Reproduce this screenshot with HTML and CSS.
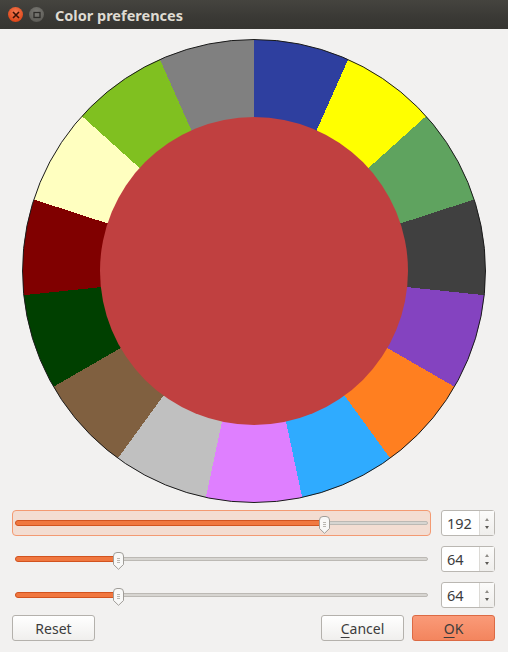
FILE: index.html
```html
<!DOCTYPE html>
<html lang="en">

<head>
    <meta charset="utf-8">
    <title>Color preferences</title>
    <link rel="stylesheet" href="styles.css">
</head>

<body>
    <div class="titlebar">
        <span class="win-btn close">
            <svg width="8" height="8" viewBox="0 0 8 8"><path d="M1 1 L7 7 M7 1 L1 7" stroke="#3a1206" stroke-width="1.6" /></svg>
        </span>
        <span class="win-btn restore">
            <svg width="8" height="8" viewBox="0 0 8 8"><rect x="1" y="1.5" width="6" height="5" fill="none" stroke="#2d2c29" stroke-width="1.3" /></svg>
        </span>
        <span class="title">Color preferences</span>
    </div>

    <div class="dialog">
        <div class="wheel-area">
            <div class="wheel">
                <div class="wheel-center"></div>
            </div>
        </div>

        <div class="channel">
            <div class="slider focused">
                <div class="groove">
                    <div class="fill" style="width: 75.3%;"></div>
                    <span class="handle" style="left: 75.3%;">
                        <svg width="11" height="18" viewBox="0 0 11 18"><path d="M0.5 4 Q0.5 0.5 4 0.5 L7 0.5 Q10.5 0.5 10.5 4 L10.5 12.5 L5.5 17.3 L0.5 12.5 Z" fill="#f8f8f7" stroke="#a09d98" /><path d="M4 6.5 H7 M4 8.5 H7 M4 10.5 H7" stroke="#b9b6b1" /></svg>
                    </span>
                </div>
            </div>
            <div class="spin">
                <span class="spin-value">192</span>
                <span class="spin-arrows"><i class="up"></i><i class="down"></i></span>
            </div>
        </div>

        <div class="channel">
            <div class="slider">
                <div class="groove">
                    <div class="fill" style="width: 25.1%;"></div>
                    <span class="handle" style="left: 25.1%;">
                        <svg width="11" height="18" viewBox="0 0 11 18"><path d="M0.5 4 Q0.5 0.5 4 0.5 L7 0.5 Q10.5 0.5 10.5 4 L10.5 12.5 L5.5 17.3 L0.5 12.5 Z" fill="#f8f8f7" stroke="#a09d98" /><path d="M4 6.5 H7 M4 8.5 H7 M4 10.5 H7" stroke="#b9b6b1" /></svg>
                    </span>
                </div>
            </div>
            <div class="spin">
                <span class="spin-value">64</span>
                <span class="spin-arrows"><i class="up"></i><i class="down"></i></span>
            </div>
        </div>

        <div class="channel">
            <div class="slider">
                <div class="groove">
                    <div class="fill" style="width: 25.1%;"></div>
                    <span class="handle" style="left: 25.1%;">
                        <svg width="11" height="18" viewBox="0 0 11 18"><path d="M0.5 4 Q0.5 0.5 4 0.5 L7 0.5 Q10.5 0.5 10.5 4 L10.5 12.5 L5.5 17.3 L0.5 12.5 Z" fill="#f8f8f7" stroke="#a09d98" /><path d="M4 6.5 H7 M4 8.5 H7 M4 10.5 H7" stroke="#b9b6b1" /></svg>
                    </span>
                </div>
            </div>
            <div class="spin">
                <span class="spin-value">64</span>
                <span class="spin-arrows"><i class="up"></i><i class="down"></i></span>
            </div>
        </div>

        <div class="buttons">
            <button class="btn">Reset</button>
            <span class="spacer"></span>
            <button class="btn"><u>C</u>ancel</button>
            <button class="btn primary"><u>O</u>K</button>
        </div>
    </div>
</body>

</html>
```

FILE: styles.css
```css
* {
    margin: 0px;
    padding: 0px;
    box-sizing: border-box;
}

body {
    width: 508px;
    height: 652px;
    background: #f2f1f0;
    font-family: "Noto Sans", "DejaVu Sans", sans-serif;
    font-size: 13px;
    color: #3c3c3c;
    overflow: hidden;
}

/* window decoration */
.titlebar {
    height: 29px;
    display: flex;
    align-items: center;
    padding-left: 8px;
    background: linear-gradient(#45443f, #3a3935 60%, #363531);
}

.win-btn {
    width: 15px;
    height: 15px;
    border-radius: 50%;
    display: flex;
    align-items: center;
    justify-content: center;
    margin-right: 6px;
}

.win-btn.close {
    background: radial-gradient(circle at 50% 35%, #f47a52, #df4a1d 70%, #b9360f);
}

.win-btn.restore {
    background: radial-gradient(circle at 50% 35%, #7c7b76, #605f5a 70%, #4a4945);
}

.title {
    margin-left: 5px;
    color: #dfdbd2;
    font-weight: bold;
    font-size: 14.5px;
}

.dialog {
    padding: 0 13px 0 12px;
}

/* colour wheel */
.wheel-area {
    height: 481px;
    display: flex;
    justify-content: center;
    padding-top: 10px;
}

.wheel {
    width: 464px;
    height: 464px;
    border-radius: 50%;
    border: 1px solid #1a1a1a;
    display: flex;
    align-items: center;
    justify-content: center;
    background: conic-gradient(
        #2e3f9f 0deg 24deg,
        #ffff00 24deg 48deg,
        #5fa35f 48deg 72deg,
        #404040 72deg 96deg,
        #8443c0 96deg 120deg,
        #ff7f20 120deg 144deg,
        #2fabff 144deg 168deg,
        #df7fff 168deg 192deg,
        #c0c0c0 192deg 216deg,
        #806040 216deg 240deg,
        #004000 240deg 264deg,
        #800000 264deg 288deg,
        #ffffc0 288deg 312deg,
        #80c020 312deg 336deg,
        #808080 336deg 360deg);
}

.wheel-center {
    width: 308px;
    height: 308px;
    border-radius: 50%;
    background: #c04040;
}

/* channel sliders */
.channel {
    display: flex;
    height: 26px;
    margin-bottom: 10px;
}

.slider {
    flex: 1;
    display: flex;
    align-items: center;
    padding: 0 1px;
    border: 1px solid transparent;
    border-radius: 4px;
}

.slider.focused {
    background: #f3ddd2;
    border-color: #f39a72;
}

.groove {
    position: relative;
    flex: 1;
    height: 4px;
    margin: 0 1px;
    background: #d7d5d1;
    border: 1px solid #bcb9b4;
    border-radius: 3px;
}

.groove .fill {
    margin: -2px 0 0 -1px;
    height: 6px;
    background: #f0773f;
    border: 1px solid #d2531f;
    border-radius: 3px;
}

.handle {
    position: absolute;
    top: -6px;
    margin-left: -6px;
    width: 11px;
    height: 18px;
}

.handle svg {
    display: block;
}

.spin {
    width: 54px;
    margin-left: 10px;
    display: flex;
    background: #fff;
    border: 1px solid #bab7b2;
    border-radius: 3px;
}

.spin-value {
    flex: 1;
    padding-left: 5px;
    line-height: 24px;
    font-size: 14.5px;
}

.spin-arrows {
    width: 15px;
    border-left: 1px solid #dcdad6;
    display: flex;
    flex-direction: column;
    align-items: center;
    justify-content: center;
    gap: 5px;
    background: linear-gradient(#fbfbfa, #efeeec);
}

.spin-arrows i {
    width: 0;
    height: 0;
    border-left: 2.5px solid transparent;
    border-right: 2.5px solid transparent;
}

.spin-arrows .up {
    border-bottom: 3px solid #8f8c87;
}

.spin-arrows .down {
    border-top: 3px solid #5c5a56;
}

/* dialog buttons */
.buttons {
    display: flex;
    gap: 8px;
    margin-top: -3px;
}

.spacer {
    flex: 1;
}

.btn {
    width: 83px;
    height: 26px;
    font-family: inherit;
    font-size: 14px;
    color: #3c3c3c;
    background: linear-gradient(#ffffff, #f0efed);
    border: 1px solid #b4b1ac;
    border-radius: 3px;
}

.btn u {
    text-underline-offset: 3px;
}

.btn.primary {
    background: linear-gradient(#fa9a78, #f3855e);
    border-color: #dc6a44;
}
```
